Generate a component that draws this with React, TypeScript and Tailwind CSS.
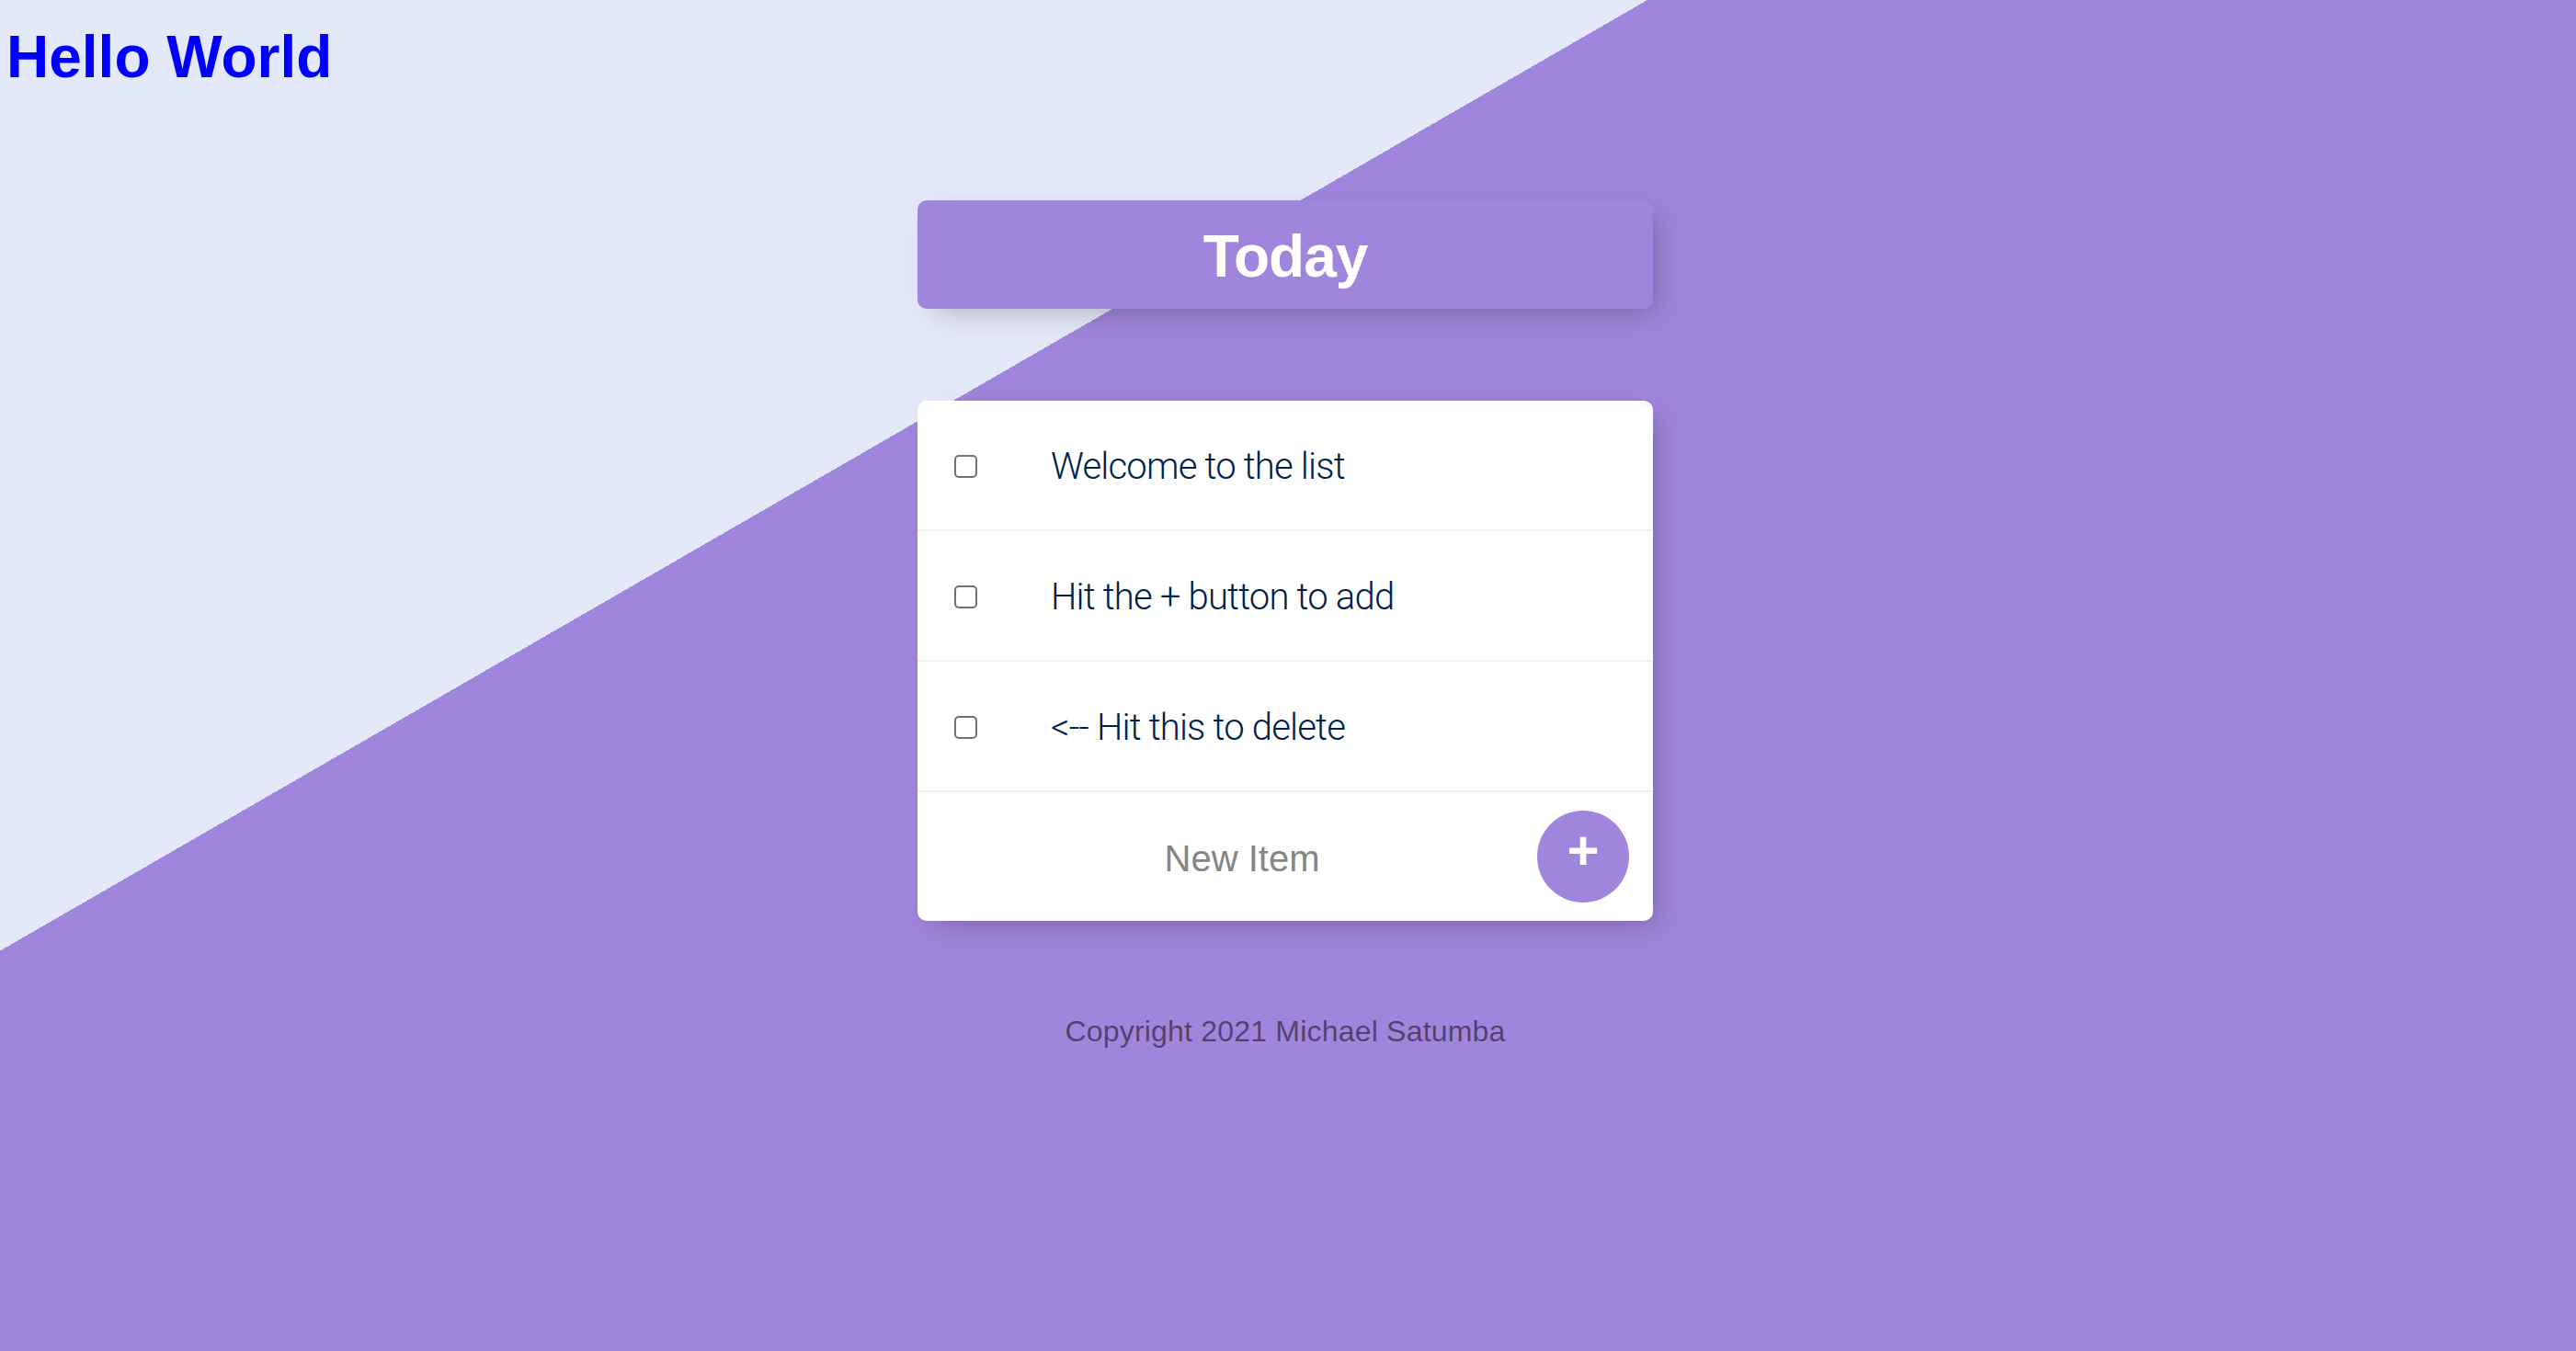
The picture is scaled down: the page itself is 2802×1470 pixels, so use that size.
const items = ['Welcome to the list', 'Hit the + button to add', '<-- Hit this to delete'];

export default function App() {
  return (
    <div className="min-h-screen w-full bg-[linear-gradient(150deg,#e4e9fa_896px,#a085dc_896px)] font-['Liberation_Sans',Arial,sans-serif]">
      <h1 className="pl-[7px] pt-[25px] text-[64px] leading-[74px] font-bold text-[#0000ff]">Hello World</h1>

      <div className="pr-[6px]">
        <div className="mx-auto mt-[119px] w-[800px] rounded-[10px] bg-[#a085dc] pt-[24px] pb-[20px] text-center shadow-[10px_10px_30px_-10px_rgba(0,0,0,0.3)]">
          <h2 className="text-[64px] leading-[74px] font-bold tracking-[-1px] text-white">Today</h2>
        </div>

        <div className="mx-auto mt-[100px] w-[800px] rounded-[10px] bg-white shadow-[10px_10px_30px_-10px_rgba(0,0,0,0.3)]">
          {items.map((item) => (
            <div key={item} className="flex min-h-[142px] items-center border-b-2 border-[#f1f1f1]">
              <input
                type="checkbox"
                className="mx-[40px] mt-[2px] h-[25px] w-[25px] shrink-0 appearance-none rounded-[5px] border-2 border-[#707070] bg-white"
              />
              <p className="px-[40px] pt-[4px] font-['Roboto',sans-serif] text-[40px] font-light tracking-[-0.8px] text-[#00204a]">
                {item}
              </p>
            </div>
          ))}
          <form className="ml-[40px] flex min-h-[140px] items-center" onSubmit={(e) => e.preventDefault()}>
            <input
              type="text"
              placeholder="New Item"
              className="h-[120px] w-[626px] pt-[4px] text-center text-[40px] text-[#00204a] outline-none placeholder:text-[#858585]"
            />
            <button
              type="submit"
              className="ml-[8px] flex h-[100px] w-[100px] items-center justify-center rounded-full bg-[#a085dc] pb-[12px] text-[60px] leading-none font-bold text-white"
            >
              +
            </button>
          </form>
        </div>

        <footer className="mt-[96px] pb-[40px] text-center text-[32px] tracking-[0.2px] text-black/50">
          Copyright 2021 Michael Satumba
        </footer>
      </div>
    </div>
  );
}
